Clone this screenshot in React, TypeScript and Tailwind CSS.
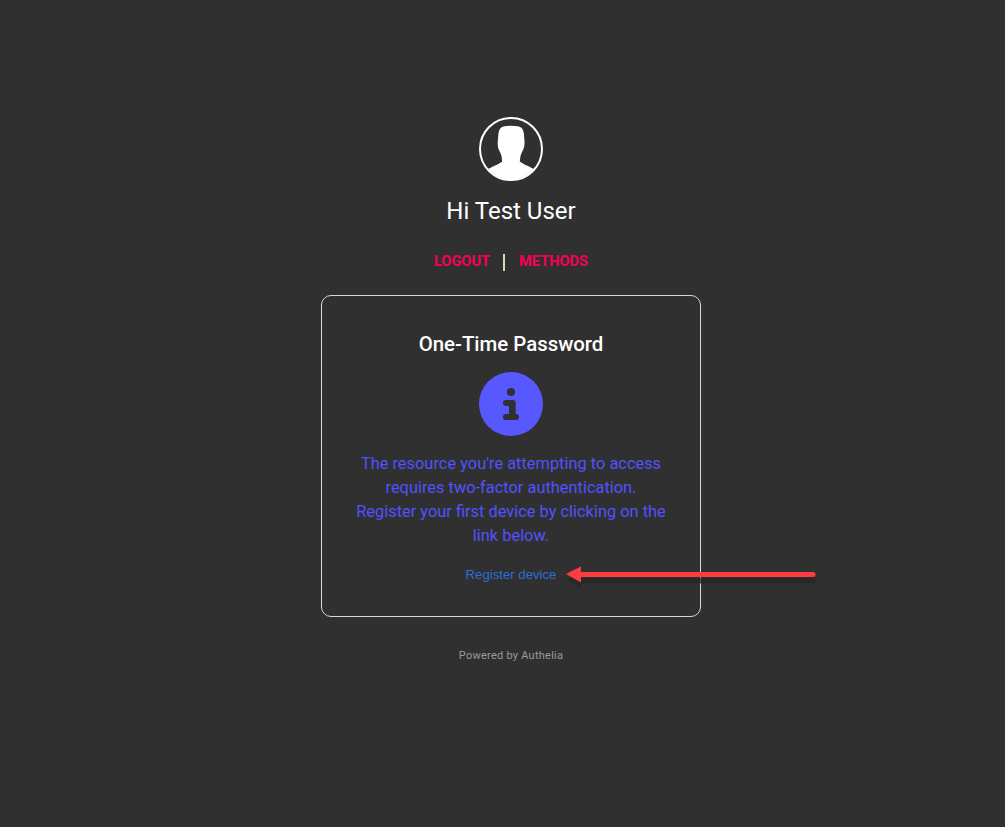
function UserAvatar() {
  return (
    <svg width="64" height="64" viewBox="0 0 64 64" className="block">
      <defs>
        <clipPath id="avatar-clip">
          <circle cx="32" cy="32" r="30.5" />
        </clipPath>
      </defs>
      <g clipPath="url(#avatar-clip)" fill="#fff">
        <path d="M25.500 9.200 C22 9.800 20 12 19.500 16 L18.800 24 C18.500 28 19 31 20 33 C21 35 22 37 22.500 39 L23.200 44.500 C21 46.500 15 49 9 52 L4 64 L60 64 L55 52 C49 49 43 46.500 40.800 44.500 L41.500 39 C42 37 43 35 44 33 C45 31 45.800 28 45.500 24 L44.800 16 C44.300 12 42.300 9.800 39 9.200 C34.500 8.500 30 8.500 25.500 9.200 Z" />
      </g>
      <circle cx="32" cy="32" r="31" fill="none" stroke="#fff" strokeWidth="2" />
    </svg>
  );
}

function InfoBadge() {
  return (
    <div className="w-16 h-16 rounded-full bg-[#5858ff] flex items-center justify-center">
      <svg width="64" height="64" viewBox="0 0 64 64" fill="#303030">
        <circle cx="32" cy="20" r="4" />
        <path d="M27 28h7a2.700 2.700 0 0 1 2.700 2.700V42H37a3 3 0 0 1 0 6H27a3 3 0 0 1 0-6h3v-8H27a3 3 0 0 1 0-6z" />
      </svg>
    </div>
  );
}

function AnnotationArrow() {
  return (
    <svg width="270" height="40" viewBox="0 0 270 40" className="absolute left-[555px] top-[555px] pointer-events-none">
      <g fill="#262626" opacity="0.75">
        <path d="M12 22l14-8v5.500h232a2.500 2.500 0 0 1 0 6H26V30z" transform="translate(0 3)" />
      </g>
      <path d="M11 19l15-7.500V17h232a2.500 2.500 0 0 1 0 5H26v5.500z" fill="#ff3d41" />
    </svg>
  );
}

export default function App() {
  return (
    <div className="relative min-h-[827px] bg-[#303030] font-['Roboto',sans-serif] flex flex-col items-center pt-[117px] pl-[17px]">
      <UserAvatar />
      <h1 className="mt-4 text-2xl leading-[28px] text-white font-normal">Hi Test User</h1>

      <div className="mt-[25px] flex items-center h-6 text-[14.6px] font-bold text-[#f50057]">
        <span>LOGOUT</span>
        <span className="w-0.5 h-[17px] ml-[13px] mr-[14px] bg-[#ddd3c0]" />
        <span>METHODS</span>
      </div>

      <div className="mt-[21px] w-[380px] h-[322px] border border-[#d8d8d8] rounded-[10px] flex flex-col items-center pt-[35px] px-8">
        <h2 className="text-[20.4px] leading-[26px] font-medium text-white">One-Time Password</h2>
        <div className="mt-[15px]">
          <InfoBadge />
        </div>
        <p className="mt-4 text-[16.4px] leading-6 text-[#5252ff] text-center whitespace-nowrap">
          The resource you're attempting to access
          <br />
          requires two-factor authentication.
          <br />
          Register your first device by clicking on the
          <br />
          link below.
        </p>
        <a className="mt-[19px] text-[13.2px] leading-4 text-[#2a6fd6] font-['Liberation_Sans',sans-serif]">Register device</a>
      </div>

      <div className="mt-[31px] text-[11px] leading-4 tracking-[0.25px] text-[#9a9a9a]">Powered by Authelia</div>

      <AnnotationArrow />
    </div>
  );
}
